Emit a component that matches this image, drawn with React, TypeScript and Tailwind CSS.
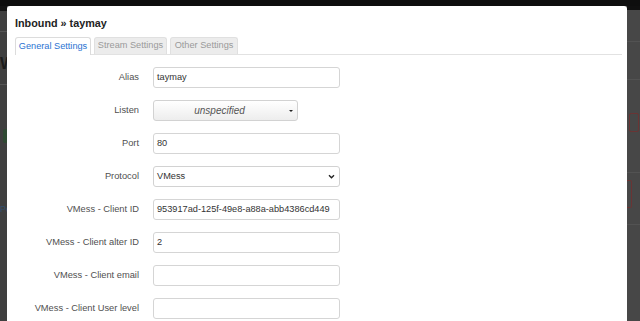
import React from "react";

const font = { fontFamily: '"Liberation Sans", Arial, sans-serif' };

const rows: { label: string; kind: "text" | "listen" | "select"; value?: string }[] = [
  { label: "Alias", kind: "text", value: "taymay" },
  { label: "Listen", kind: "listen" },
  { label: "Port", kind: "text", value: "80" },
  { label: "Protocol", kind: "select", value: "VMess" },
  { label: "VMess - Client ID", kind: "text", value: "953917ad-125f-49e8-a88a-abb4386cd449" },
  { label: "VMess - Client alter ID", kind: "text", value: "2" },
  { label: "VMess - Client email", kind: "text", value: "" },
  { label: "VMess - Client User level", kind: "text", value: "" },
];

function Field({ kind, value }: { kind: string; value?: string }) {
  if (kind === "listen") {
    return (
      <div className="flex h-[21px] w-[145px] items-center rounded-[3px] border border-[#d2d2d2] bg-gradient-to-b from-white to-[#ededed]">
        <span className="flex-1 pl-[8px] text-center text-[10px] italic text-[#555]">unspecified</span>
        <span className="mr-[4px] ml-[12px] h-0 w-0 border-x-[2px] border-t-[2px] border-x-transparent border-t-[#222]" />
      </div>
    );
  }
  if (kind === "select") {
    return (
      <div className="flex h-[21px] w-[187px] items-center rounded-[3px] border border-[#d2d2d2] bg-white pl-[3px] pr-[3px] text-[9.2px] text-[#333]">
        <span className="flex-1">{value}</span>
        <svg width="7" height="5" viewBox="0 0 7 5" className="mr-[1px]">
          <path d="M1 1.2 L3.5 3.7 L6 1.2" fill="none" stroke="#222" strokeWidth="1.4" />
        </svg>
      </div>
    );
  }
  return (
    <div className="flex h-[21px] w-[187px] items-center rounded-[3px] border border-[#d5d5d5] bg-white pl-[3px] text-[9.2px] text-[#333]">
      {value}
    </div>
  );
}

export default function App() {
  return (
    <div className="flex h-[321px] w-[640px] flex-col overflow-hidden bg-[#474747]" style={font}>
      <div className="h-[6px] shrink-0 bg-[#0e0e0e]" />
      <div className="flex flex-1">
        {/* dimmed page behind, left side */}
        <div className="flex w-[7px] shrink-0 flex-col bg-[#3f3f3f]">
          <div className="h-[5px] bg-[#141414]" />
          <div className="mt-[20px] h-px bg-[#555]" />
          <div className="mt-[24px] text-[16px] font-bold leading-none text-[#1b1b1b]">W</div>
          <div className="mt-[12px] h-px bg-[#555]" />
          <div className="mt-[44px] ml-[3px] h-[14px] w-[4px] rounded-l-[2px] bg-[#2f4a33]" />
          <div className="mt-[60px] text-[9px] text-[#33506e]">Pe</div>
        </div>

        {/* modal */}
        <div className="flex w-[620px] shrink-0 flex-col rounded-t-[3px] bg-white pl-[8px] pr-[5px]">
          <div className="pt-[11px] text-[10.8px] font-bold leading-[13px] text-[#222]">Inbound » taymay</div>
          <div className="mt-[7px] flex h-[18px] items-end gap-[3px] border-b border-[#e2e2e2]">
            <div className="-mb-px flex h-[18px] w-[76px] items-center justify-center rounded-t-[3px] border border-b-0 border-[#dcdcdc] bg-white text-[9.2px] text-[#2b73d2]">
              General Settings
            </div>
            <div className="flex h-[17px] w-[73px] items-center justify-center rounded-t-[3px] border border-b-0 border-[#e0e0e0] bg-[#ececec] text-[9.2px] text-[#9a9a9a]">
              Stream Settings
            </div>
            <div className="flex h-[17px] w-[68px] items-center justify-center rounded-t-[3px] border border-b-0 border-[#e0e0e0] bg-[#ececec] text-[9.2px] text-[#9a9a9a]">
              Other Settings
            </div>
          </div>
          <div className="mt-[12px] flex flex-col gap-[12px]">
            {rows.map((r) => (
              <div key={r.label} className="flex items-center">
                <div className="w-[124px] text-right text-[9.3px] text-[#505050]">{r.label}</div>
                <div className="ml-[14px]">
                  <Field kind={r.kind} value={r.value} />
                </div>
              </div>
            ))}
          </div>
        </div>

        {/* dimmed page behind, right side */}
        <div className="flex flex-1 flex-col">
          <div className="h-[4px] bg-[#101010]" />
          <div className="mt-[31px] h-px bg-[#525252]" />
          <div className="mt-[37px] h-px bg-[#525252]" />
          <div className="mt-[33px] ml-[2px] h-[19px] w-[10px] rounded-[2px] border border-[#6a3434]" />
          <div className="mt-[40px] h-px bg-[#525252]" />
          <div className="mt-[7px] h-[28px] w-[5px] rounded-r-[2px] border border-l-0 border-[#6a3434]" />
          <div className="mt-[16px] h-px bg-[#525252]" />
        </div>
      </div>
    </div>
  );
}
